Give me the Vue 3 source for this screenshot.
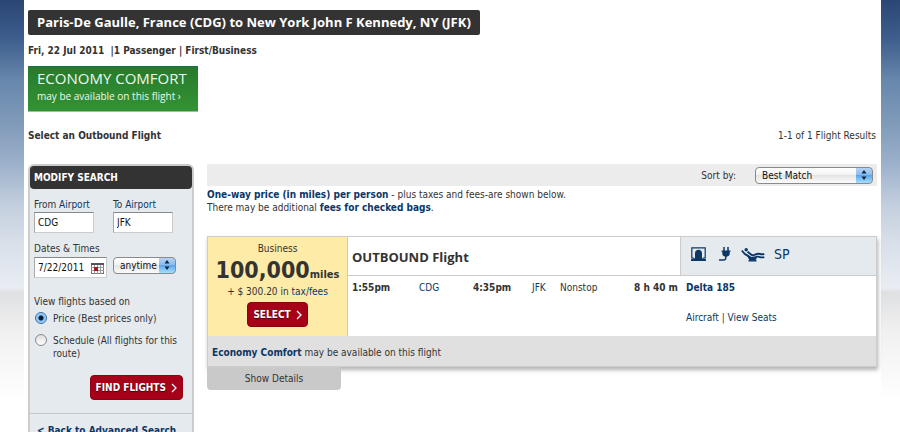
<script setup>
import { ref } from 'vue'

const from = ref('CDG')
const to = ref('JFK')
const date = ref('7/22/2011')
const time = ref('anytime')
const basis = ref('price')
const sort = ref('Best Match')
</script>

<template>
  <div class="page">
    <main class="sheet">
      <h1 class="route">Paris-De Gaulle, France (CDG) to New York John F Kennedy, NY (JFK)</h1>
      <p class="meta">Fri, 22 Jul 2011 &nbsp;|1 Passenger | First/Business</p>
      <a class="promo" href="#comfort">
        <span class="promo-title">ECONOMY COMFORT</span>
        <span class="promo-sub">may be available on this flight ›</span>
      </a>
      <div class="heading">
        <h2>Select an Outbound Flight</h2>
        <span>1-1 of 1 Flight Results</span>
      </div>

      <div class="columns">
        <form class="side" @submit.prevent>
          <h2 class="side-title">MODIFY SEARCH</h2>
          <div class="fields">
            <div class="field">
              <span class="cap"><label for="from">From</label> <a href="#airports">Airport</a></span>
              <input id="from" v-model="from" class="box" type="text" />
            </div>
            <div class="field">
              <span class="cap"><label for="to">To</label> <a href="#airports">Airport</a></span>
              <input id="to" v-model="to" class="box" type="text" />
            </div>
          </div>
          <label class="cap dates" for="date">Dates &amp; Times</label>
          <div class="fields">
            <div class="date">
              <input id="date" v-model="date" class="box" type="text" />
              <button class="cal" type="button" aria-label="Calendar">
                <svg viewBox="0 0 13 11" width="13" height="11">
                  <rect x="0.5" y="0.5" width="12" height="10" fill="#fff" stroke="#777" />
                  <path d="M0 1h13" stroke="#555" stroke-width="2" />
                  <path d="M3.5 2v9M6.5 2v9M9.5 2v9M0 4.500h13M0 7.500h13" stroke="#999" />
                  <rect x="3" y="4" width="4" height="4" fill="#a3161f" />
                </svg>
              </button>
            </div>
            <div class="picker time">
              <select v-model="time" aria-label="Time"><option>anytime</option><option>morning</option></select>
              <svg viewBox="0 0 16 16" width="16" height="16"><path d="M8 3l2.500 3.500h-5zM8 13l2.500-3.500h-5z" fill="#10243c" /></svg>
            </div>
          </div>
          <fieldset class="basis">
            <legend>View flights based on</legend>
            <label class="choice"><input v-model="basis" type="radio" value="price" /><span>Price (Best prices only)</span></label>
            <label class="choice"><input v-model="basis" type="radio" value="schedule" /><span>Schedule (All flights for this route)</span></label>
          </fieldset>
          <div class="submit">
            <button class="red find" type="submit">FIND FLIGHTS
              <svg viewBox="0 0 6 10" width="6" height="10"><path d="M1 1l4 4-4 4" fill="none" stroke="#fff" stroke-width="1.300" /></svg>
            </button>
          </div>
          <div class="back"><a href="#advanced">&lt; Back to Advanced Search</a></div>
        </form>

        <section class="results">
          <div class="toolbar">
            <label for="sort">Sort by:</label>
            <div class="picker sort">
              <select id="sort" v-model="sort"><option>Best Match</option><option>Price</option></select>
              <svg viewBox="0 0 16 16" width="16" height="16"><path d="M8 3l2.500 3.500h-5zM8 13l2.500-3.500h-5z" fill="#10243c" /></svg>
            </div>
          </div>
          <p class="note">
            <a class="strong" href="#price">One-way price (in miles) per person</a> - plus taxes and fees-are shown below.<br />
            There may be additional <a class="strong" href="#bags">fees for checked bags</a>.
          </p>

          <article class="card">
            <div class="price">
              <span>Business</span>
              <strong class="miles">100,000<small>miles</small></strong>
              <span class="fees">+ $ 300.20 in <a href="#fees">tax/fees</a></span>
              <button class="red" type="button">SELECT
                <svg viewBox="0 0 6 10" width="6" height="10"><path d="M1 1l4 4-4 4" fill="none" stroke="#fff" stroke-width="1.300" /></svg>
              </button>
            </div>
            <h3 class="leg-title">OUTBOUND Flight</h3>
            <div class="amenities">
              <svg viewBox="0 0 15 14" width="15" height="14" class="screen">
                <path d="M3 11H.8V.800h13.400V11H12" fill="none" stroke="#0b3768" stroke-width="1.200" />
                <path d="M0 14v-1.500c1-.9 2-1 4-1.200V6.200C4 4 5.400 2.800 7.500 2.800s3.500 1.200 3.500 3.400v5.100c2 .2 3 .3 4 1.200V14z" fill="#0b3768" />
              </svg>
              <svg viewBox="0 0 12 14" width="12" height="14" class="plug">
                <path d="M5 0v4M9 0v4" stroke="#0b3768" stroke-width="1.500" />
                <path d="M2.500 3.500h9v1.200h-.8v2c0 1.800-1.500 3-3.700 3S3.300 8.500 3.300 6.700v-2h-.8z" fill="#0b3768" />
                <path d="M6.800 9v2c0 1.500-.7 2-2.300 2H0" fill="none" stroke="#0b3768" stroke-width="1.400" />
              </svg>
              <svg viewBox="0 0 24 15" width="24" height="15">
                <circle cx="5.200" cy="2.800" r="1.700" fill="#0b3768" />
                <path d="M.8 3.500l3 3.500 5.500 3.500c3 1.300 5-1.300 8-.8 2 .3 3.500 1.500 6 .3" fill="none" stroke="#0b3768" stroke-width="1.800" />
                <path d="M6.500 4.800l4.500 3.400c2 .6 4-1.700 6.500-1.500 2 .2 3.500 1.300 5.700.1" fill="none" stroke="#0b3768" stroke-width="2" />
                <path d="M5 6.500l6 4h5l-1.500 3H8.500l-1-2" fill="#0b3768" />
                <path d="M7.500 13.800h8" stroke="#0b3768" stroke-width="1.400" />
              </svg>
              <a href="#meal">SP</a>
            </div>
            <div class="leg">
              <b>1:55pm</b><a href="#cdg">CDG</a><b>4:35pm</b><a href="#jfk">JFK</a><span>Nonstop</span><b class="duration">8 h 40 m</b>
            </div>
            <div class="plane">
              <a class="strong" href="#dl185">Delta 185</a>
              <span><a href="#aircraft">Aircraft</a> | <a href="#seats">View Seats</a></span>
            </div>
            <p class="comfort"><a class="strong" href="#comfort">Economy Comfort</a> may be available on this flight</p>
          </article>
          <button class="details" type="button">Show Details</button>
        </section>
      </div>
    </main>
  </div>
</template>

<style>
body {
  margin: 0;
}
</style>

<style scoped>
* {
  box-sizing: border-box;
}
.page {
  height: 100vh;
  overflow: hidden;
  padding: 0 19px 0 24px;
  background: linear-gradient(#2a4674 0, #3f5f8e 40px, #6787ac 80px, #819bba 125px, #9db2cb 165px, #c3cfde 205px, #d9e0ea 245px, #e9edf3 288px, #dfe0e2 292px, #f0f0f0 330px, #fff 400px);
  color: #333;
  font: 10px/13px "DejaVu Sans Condensed", "DejaVu Sans", sans-serif;
}
.sheet {
  min-height: 100%;
  padding: 10px 4px 0;
  background: #fff;
}
h1, h2, h3, p {
  margin: 0;
  font-size: 10px;
}
a {
  color: #0b3768;
  text-decoration: none;
}
button, input, select {
  margin: 0;
  font: inherit;
  color: inherit;
}
svg {
  display: block;
  flex: none;
}
.strong {
  font-weight: bold;
}
.route {
  width: fit-content;
  padding: 0 9px;
  border-radius: 2px;
  background: #333;
  color: #fff;
  font-family: "Open Sans", sans-serif;
  font-size: 13px;
  line-height: 25px;
}
.meta {
  margin-top: 9px;
  font-weight: bold;
  line-height: 14px;
}
.promo {
  display: flex;
  flex-direction: column;
  width: 170px;
  height: 46px;
  margin-top: 8px;
  padding: 2px 9px 0;
  border-top: 1px solid #1f6a50;
  border-bottom: 1px solid #9ab7c4;
  background: linear-gradient(#277a2c, #339334);
  color: #eef7ee;
  font-family: "Open Sans", sans-serif;
  white-space: nowrap;
}
.promo-title {
  font-size: 15px;
  line-height: 19px;
}
.promo-sub {
  line-height: 16px;
}
.heading {
  display: flex;
  justify-content: space-between;
  margin: 17px 1px 21px 0;
  line-height: 14px;
}
.columns {
  display: grid;
  grid-template-columns: 166px minmax(0, 1fr);
  align-items: start;
  gap: 13px;
}
.side {
  padding-bottom: 24px;
  border: 2px solid #ccc;
  border-radius: 6px;
  background: #e5eaee;
}
.side-title {
  padding-left: 4px;
  border-radius: 4px;
  background: #333;
  color: #fff;
  line-height: 23px;
}
.fields {
  display: grid;
  grid-template-columns: 79px 1fr;
  padding-left: 4px;
}
.field {
  padding-top: 9px;
}
.cap {
  display: block;
  line-height: 14px;
}
.dates {
  margin: 9px 0 1px 4px;
}
.box {
  width: 60px;
  height: 21px;
  padding: 0 3px;
  border: 1px solid #ccc;
  border-top-color: #888;
  border-left-color: #aaa;
  background: #fff;
  color: #111;
}
.date {
  position: relative;
}
.date .box {
  width: 73px;
}
.cal {
  position: absolute;
  top: 6px;
  left: 57px;
  padding: 0;
  border: 0;
  background: none;
}
.picker {
  position: relative;
  height: 17px;
}
.picker select {
  display: block;
  width: 100%;
  height: 100%;
  padding: 0 16px 0 6px;
  appearance: none;
  border: 1px solid #8a8a8a;
  border-radius: 4px;
  background:
    linear-gradient(#b5d3f5, #8cbcf0 45%, #5ea5ea 50%, #a7e0ff) right / 16px 100% no-repeat,
    linear-gradient(#fff, #f3f3f3 45%, #e4e4e4 50%, #fbfbfb);
  color: #111;
}
.picker svg {
  position: absolute;
  top: 0;
  right: 1px;
  pointer-events: none;
}
.time {
  width: 63px;
}
.basis {
  margin: 17px 0 0 4px;
  padding: 0;
  border: 0;
}
.basis legend {
  padding: 0;
}
.choice {
  display: flex;
  align-items: flex-start;
  gap: 6px;
  padding: 4px 4px 0 1px;
}
.choice + .choice {
  padding-top: 9px;
}
.choice input {
  flex: none;
  width: 12px;
  height: 12px;
  appearance: none;
  border: 1px solid #888;
  border-radius: 50%;
  background: linear-gradient(#ddd, #fff);
}
.choice input:checked {
  border-color: #3a6ba5;
  background: radial-gradient(circle, #0c1d33 0 2px, #7dbcf5 3px, #a8d9ff 5px);
}
.submit {
  display: flex;
  justify-content: flex-end;
  padding: 15px 9px 13px 0;
}
.red {
  display: flex;
  align-items: center;
  gap: 5px;
  height: 25px;
  padding: 0 5px;
  border: 1px solid #8f0014;
  border-radius: 4px;
  background: #a70019;
  color: #fff;
  font-weight: bold;
  text-shadow: 0 1px 1px #400;
  white-space: nowrap;
}
.back {
  padding: 10px 7px 0;
  border-top: 1px solid #c4c8cc;
  font-weight: bold;
}
.toolbar {
  display: flex;
  align-items: center;
  justify-content: flex-end;
  gap: 19px;
  height: 22px;
  padding-right: 4px;
  background: #ececec;
}
.sort {
  width: 118px;
}
.note {
  margin: 2px 0 22px;
}
.card {
  display: grid;
  grid-template-columns: 140px minmax(0, 1fr) 196px;
  grid-template-rows: 39px 60px auto;
  border: 1px solid #ccc;
  box-shadow: 1px 3px 4px rgba(0, 0, 0, 0.3);
  background: #fff;
}
.price {
  grid-row: span 2;
  display: flex;
  flex-direction: column;
  align-items: center;
  padding-top: 5px;
  border-right: 1px solid #ccc;
  background: #feeba8;
}
.miles {
  font-size: 23px;
  line-height: 30px;
  white-space: nowrap;
}
.miles small {
  font-size: 11px;
  line-height: 11px;
}
.fees {
  margin-bottom: 4px;
}
.leg-title {
  padding-left: 4px;
  border-bottom: 1px solid #ccc;
  font-family: "Open Sans", sans-serif;
  font-size: 13px;
  line-height: 40px;
}
.amenities {
  display: flex;
  align-items: center;
  padding: 0 10px 4px;
  border-bottom: 1px solid #ccc;
  border-left: 1px solid #ccc;
  background: #e5eaee;
  font-size: 14px;
  line-height: 20px;
}
.amenities .screen {
  margin-right: 13px;
}
.amenities .plug {
  margin-right: 10px;
}
.amenities a {
  margin-left: 9px;
}
.leg {
  display: grid;
  grid-template-columns: 67px 54px 59px 28px 1fr auto;
  align-content: start;
  padding: 5px 2px 0 4px;
}
.plane {
  display: flex;
  flex-direction: column;
  gap: 17px;
  padding: 5px 6px 0;
}
.comfort {
  grid-column: 1 / -1;
  padding: 10px 4px 7px;
  background: #e0e0e0;
}
.details {
  display: block;
  width: 134px;
  height: 23px;
  border: 0;
  border-radius: 0 0 4px 4px;
  background: #c9c9c9;
  position: relative;
}
</style>
